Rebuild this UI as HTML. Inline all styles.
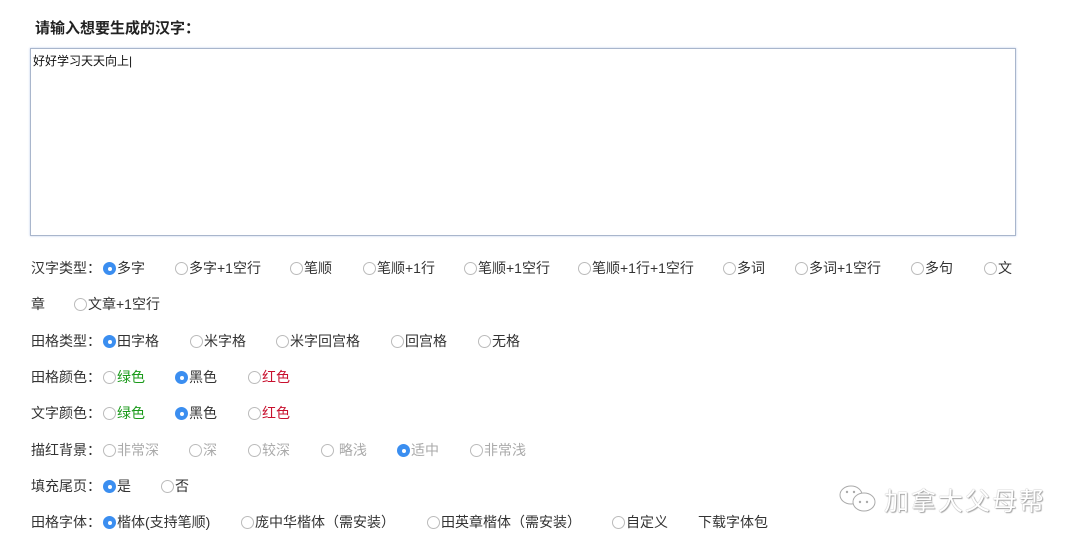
<!DOCTYPE html>
<html><head><meta charset="utf-8"><style>
body{margin:0;width:1080px;height:545px;background:#fff;font-family:"Liberation Sans","Noto Sans CJK SC",sans-serif;color:#333;position:relative;overflow:hidden}
.t{position:absolute;left:35px;top:17px;font-size:15px;font-weight:bold;color:#222}
.ta{position:absolute;left:30px;top:48px;border:1px solid #a9b6cc;box-shadow:0 0 2px #b8c8e8;font-size:12px;padding:3px 2px;box-sizing:border-box;width:986px;height:188px;color:#111}
.s{position:absolute;font-size:14px;line-height:16px;white-space:nowrap}
.r{position:absolute;width:13px;height:13px;border:1px solid #bbb;border-radius:50%;box-sizing:border-box;background:#fff}
.r.c{background:#3b8ef0;border-color:#3b8ef0}
.r.c::after{content:"";position:absolute;left:3.5px;top:3.5px;width:4px;height:4px;border-radius:50%;background:#fff}
.g{color:#1a9a1a}.rd{color:#c8102e}.gy{color:#aaa}
.wm{position:absolute;left:884px;top:482px;font-size:25px;color:#fff;text-shadow:0 0 1px #888,1px 1px 1px #aaa;letter-spacing:2px}
</style></head><body>
<div class="t">请输入想要生成的汉字：</div>
<div class="ta">好好学习天天向上|</div>
<div id="f"></div>
<div class="wm">加拿大父母帮</div>
<svg style="position:absolute;left:838px;top:484px" width="44" height="30"><ellipse cx="13" cy="11" rx="11" ry="9" fill="#fff" stroke="#aaa"/><ellipse cx="26" cy="18" rx="11" ry="9" fill="#fff" stroke="#aaa"/><circle cx="9" cy="8" r="1.2" fill="#aaa"/><circle cx="16" cy="8" r="1.2" fill="#aaa"/><circle cx="22" cy="18" r="1.2" fill="#aaa"/><circle cx="29" cy="18" r="1.2" fill="#aaa"/></svg>
<script>
var rows=[
[260,[["汉字类型：",31,-1],["多字",103,1],["多字+1空行",175],["笔顺",290],["笔顺+1行",363],["笔顺+1空行",464],["笔顺+1行+1空行",578],["多词",723],["多词+1空行",795],["多句",911],["文",984]]],
[296,[["章",31,-1],["文章+1空行",74]]],
[333,[["田格类型：",31,-1],["田字格",103,1],["米字格",190],["米字回宫格",276],["回宫格",391],["无格",478]]],
[369,[["田格颜色：",31,-1],["绿色",103,0,"g"],["黑色",175,1],["红色",248,0,"rd"]]],
[405,[["文字颜色：",31,-1],["绿色",103,0,"g"],["黑色",175,1],["红色",248,0,"rd"]]],
[442,[["描红背景：",31,-1],["非常深",103,0,"gy"],["深",189,0,"gy"],["较深",248,0,"gy"],["&nbsp;略浅",321,0,"gy"],["适中",397,1,"gy"],["非常浅",470,0,"gy"]]],
[478,[["填充尾页：",31,-1],["是",103,1],["否",161]]],
[514,[["田格字体：",31,-1],["楷体(支持笔顺)",103,1],["庞中华楷体（需安装）",241],["田英章楷体（需安装）",427],["自定义",612],["下载字体包",698,-1]]]];
var h="";rows.forEach(function(r){var y=r[0];r[1].forEach(function(it){var x=it[1];if(it[2]!==-1){h+='<div class="r'+(it[2]==1?' c':'')+'" style="left:'+x+'px;top:'+(y+2)+'px"></div>';x+=14;}h+='<div class="s '+(it[3]||'')+'" style="left:'+x+'px;top:'+y+'px">'+it[0]+'</div>';});});
document.getElementById("f").innerHTML=h;
</script>
</body></html>
